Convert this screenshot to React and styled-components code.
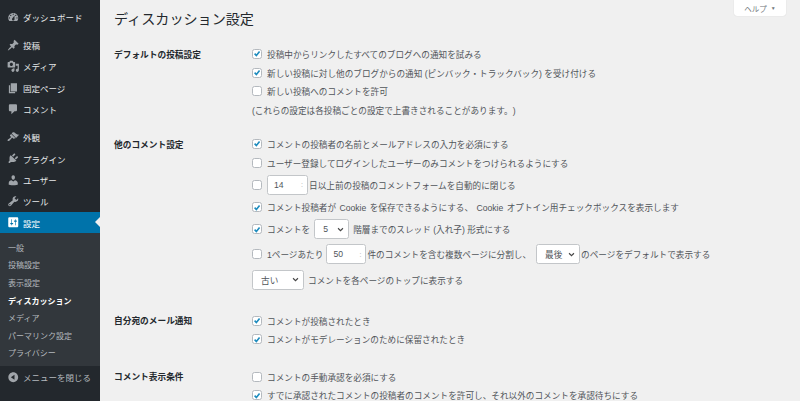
import React from 'react';
import styled, { createGlobalStyle } from 'styled-components';

const GlobalStyle = createGlobalStyle`
  html, body {
    margin: 0;
    padding: 0;
    height: 401px;
    overflow: hidden;
    background: #f0f0f0;
    font-family: "Liberation Sans", "Noto Sans CJK JP", sans-serif;
    text-spacing-trim: space-all;
  }
`;

const Page = styled.div`
  display: flex;
  width: 800px;
  height: 401px;
  overflow: hidden;
`;

const Sidebar = styled.nav`
  width: 100px;
  flex-shrink: 0;
  background: #23282d;
  padding-top: 6.3px;
  box-sizing: border-box;
`;

const MenuItem = styled.div`
  position: relative;
  display: flex;
  align-items: center;
  height: 21.4px;
  margin-bottom: ${(p) => (p.$sep ? '6.6px' : '0')};
  padding-left: 7px;
  font-size: 8.5px;
  color: ${(p) => (p.$active ? '#fff' : '#e6e8ea')};
  background: ${(p) => (p.$active ? '#0073aa' : 'transparent')};

  svg {
    width: 12.5px;
    height: 12.5px;
    margin-right: 3.5px;
    flex-shrink: 0;
    fill: ${(p) => (p.$active ? '#fff' : '#a0a5aa')};
  }

  ${(p) =>
    p.$active &&
    `&::after {
      content: "";
      position: absolute;
      right: 0;
      top: 5px;
      border: 5.5px solid transparent;
      border-right-color: #f0f0f0;
      border-left-width: 0;
    }`}
`;

const SubMenu = styled.div`
  background: #32373c;
  padding: 6.5px 0 2.5px 8px;
`;

const SubItem = styled.div`
  height: 17.6px;
  line-height: 17.6px;
  font-size: 8px;
  font-weight: ${(p) => (p.$current ? 700 : 400)};
  color: ${(p) => (p.$current ? '#fff' : '#b4b9be')};
`;

const CollapseRow = styled(MenuItem)`
  margin-top: 1px;
  color: #b4b9be;
`;

const Main = styled.main`
  position: relative;
  flex: 1;
  padding-left: 14px;
  background: #f0f0f0;
  color: #50555a;
`;

const HelpTab = styled.div`
  position: absolute;
  top: 0;
  right: 14px;
  width: 52px;
  height: 16px;
  box-sizing: border-box;
  display: flex;
  align-items: center;
  justify-content: center;
  gap: 4px;
  background: #fff;
  border-radius: 0 0 3px 3px;
  box-shadow: 0 0 1px rgba(0, 0, 0, 0.2);
  font-size: 7.5px;
  color: #72777c;

  span {
    font-size: 5px;
  }
`;

const Title = styled.h1`
  margin: 0;
  padding-top: 9px;
  height: 44.6px;
  box-sizing: border-box;
  font-size: 14.1px;
  line-height: 20px;
  font-weight: 400;
  color: #23282d;
`;

const Section = styled.section`
  display: flex;
  padding-bottom: ${(p) => p.$after || 18.7}px;
`;

const Label = styled.div`
  width: 138px;
  flex-shrink: 0;
  height: 18.7px;
  padding-top: 1px;
  box-sizing: content-box;
  line-height: 18.7px;
  font-size: 8.7px;
  font-weight: 700;
  color: #23282d;
`;

const Fields = styled.div`
  display: flex;
  flex-direction: column;
`;

const Row = styled.div`
  display: flex;
  align-items: center;
  height: ${(p) => p.$h || 18.7}px;
  font-size: 8.65px;
  white-space: pre;
  word-spacing: ${(p) => p.$wordGap || 0}px;
`;

const Box = styled.span`
  width: 10px;
  height: 10px;
  box-sizing: border-box;
  margin-right: 5px;
  flex-shrink: 0;
  display: flex;
  align-items: center;
  justify-content: center;
  background: #fff;
  border: 1px solid #b4b9be;
  border-radius: 2.5px;

  svg {
    width: 9px;
    height: 9px;
    fill: none;
    stroke: #1e8cbe;
    stroke-width: 2;
  }
`;

const Field = styled.span`
  height: 20px;
  width: ${(p) => p.$w}px;
  box-sizing: border-box;
  flex-shrink: 0;
  display: flex;
  align-items: center;
  justify-content: space-between;
  margin: 0 ${(p) => (p.$mr === undefined ? 1 : p.$mr)}px 0 ${(p) => p.$ml || 0}px;
  padding: 0 4px 0 ${(p) => p.$pad || 6}px;
  background: #fff;
  border: 1px solid #c3c6c9;
  border-radius: 2.5px;
  font-size: 8.65px;
  color: #50555a;

  svg {
    width: 7px;
    height: 7px;
    fill: none;
    stroke: #444;
    stroke-width: 1.6;
  }
`;

const Spin = styled.i`
  font-style: normal;
  font-size: 7px;
  color: #a8a8a8;
`;

const Ic = ({ d }) => (
  <svg viewBox="0 0 20 20">
    <path d={d} />
  </svg>
);

const icons = {
  dashboard:
    'M3.76 16h12.48c1.1-1.37 1.76-3.11 1.76-5 0-4.42-3.58-8-8-8s-8 3.58-8 8c0 1.89.66 3.63 1.76 5zM10 4c.55 0 1 .45 1 1s-.45 1-1 1-1-.45-1-1 .45-1 1-1zM6 6c.55 0 1 .45 1 1s-.45 1-1 1-1-.45-1-1 .45-1 1-1zm8 0c.55 0 1 .45 1 1s-.45 1-1 1-1-.45-1-1 .45-1 1-1zm-5.37 5.55L12 7v6c0 1.1-.9 2-2 2s-2-.9-2-2c0-.57.24-1.08.63-1.45zM4 10c.55 0 1 .45 1 1s-.45 1-1 1-1-.45-1-1 .45-1 1-1zm12 0c.55 0 1 .45 1 1s-.45 1-1 1-1-.45-1-1 .45-1 1-1z',
  post:
    'M10.44 3.02l1.82-1.82 6.36 6.35-1.83 1.82c-1.05-.68-2.48-.57-3.41.36l-.75.75c-.92.93-1.04 2.35-.35 3.41l-1.83 1.82-2.41-2.41-2.8 2.79c-.42.42-3.38 2.71-3.8 2.29s1.86-3.39 2.28-3.81l2.79-2.79L4.1 9.36l1.83-1.82c1.05.69 2.48.57 3.4-.36l.75-.75c.93-.92 1.05-2.35.36-3.41z',
  media:
    'M13 11V4c0-.55-.45-1-1-1h-1.67L9 1H5L3.67 3H2c-.55 0-1 .45-1 1v7c0 .55.45 1 1 1h10c.55 0 1-.45 1-1zM7 4.5c1.38 0 2.5 1.12 2.5 2.5S8.38 9.5 7 9.5 4.5 8.38 4.5 7 5.62 4.5 7 4.5zM14 6h5v10.5c0 1.38-1.12 2.5-2.5 2.5S14 17.88 14 16.5s1.12-2.5 2.5-2.5c.17 0 .34.02.5.05V9h-3V6zm-4 8.05V13h2v3.5c0 1.38-1.12 2.5-2.5 2.5S7 17.88 7 16.5 8.12 14 9.5 14c.17 0 .34.02.5.05z',
  page: 'M6 15V2h10v13H6zm-1 1h8v2H3V5h2v11z',
  comment:
    'M5 2h9c1.1 0 2 .9 2 2v7c0 1.1-.9 2-2 2h-2l-5 5v-5H5c-1.1 0-2-.9-2-2V4c0-1.1.9-2 2-2z',
  appearance:
    'M14.48 11.06L7.41 3.99l1.5-1.5c.5-.56 2.3-.47 3.51.32 1.21.8 1.43 1.28 2.91 2.1 1.18.64 2.45 1.26 4.45.85zm-.71.71L6.7 4.7 4.93 6.47c-.39.39-.39 1.02 0 1.41l1.06 1.06c.39.39.39 1.03 0 1.42-.6.6-1.43 1.11-2.21 1.69-.35.26-.7.53-1.01.84C1.43 13.23.4 14.99 1.2 15.8c.8.81 2.52-.2 3.86-1.56.3-.31.57-.66.84-1.02.57-.78 1.08-1.61 1.69-2.21.39-.39 1.02-.39 1.41 0l1.06 1.06c.39.39 1.02.39 1.41 0z',
  plugin:
    'M13.11 4.36L9.87 7.6 8 5.73l3.24-3.24c.35-.34 1.05-.2 1.56.32.52.51.66 1.21.31 1.55zm-8 1.77l.91-1.12 9.01 9.01-1.19.84c-.71.71-2.63 1.16-3.82 1.16H6.14L4.9 17.26c-.59.59-1.54.59-2.12 0-.59-.58-.59-1.53 0-2.12l1.24-1.24v-3.88c0-1.13.4-3.19 1.09-3.89zm7.26 3.97l3.24-3.24c.34-.35 1.04-.21 1.55.31.52.51.66 1.21.31 1.55l-3.24 3.25z',
  users:
    'M10 9.25c-2.27 0-2.73-3.44-2.73-3.44C7 4.02 7.82 2 9.97 2c2.16 0 2.98 2.02 2.71 3.81 0 0-.41 3.44-2.68 3.44zm0 2.57L12.72 10c2.39 0 4.52 2.33 4.52 4.53v2.49s-3.65 1.13-7.24 1.13c-3.65 0-7.24-1.13-7.24-1.13v-2.49c0-2.25 1.94-4.48 4.47-4.48z',
  tools:
    'M16.68 9.77c-1.34 1.34-3.3 1.67-4.95.99l-5.41 6.52c-.99.99-2.59.99-3.58 0s-.99-2.59 0-3.57l6.52-5.42c-.68-1.65-.35-3.61.99-4.95 1.28-1.28 3.12-1.62 4.72-1.06l-2.89 2.89 2.82 2.82 2.86-2.87c.53 1.58.18 3.39-1.08 4.65zM3.81 16.21c.4.39 1.04.39 1.43 0 .4-.4.4-1.04 0-1.43-.39-.4-1.03-.4-1.43 0-.39.39-.39 1.03 0 1.43z',
  settings:
    'M18 16V4c0-1.1-.9-2-2-2H4c-1.1 0-2 .9-2 2v12c0 1.1.9 2 2 2h12c1.1 0 2-.9 2-2zM8 11h1c.55 0 1 .45 1 1s-.45 1-1 1H8v1.5c0 .28-.22.5-.5.5s-.5-.22-.5-.5V13H6c-.55 0-1-.45-1-1s.45-1 1-1h1V5.5c0-.28.22-.5.5-.5s.5.22.5.5V11zm5-2h-1c-.55 0-1-.45-1-1s.45-1 1-1h1V5.5c0-.28.22-.5.5-.5s.5.22.5.5V7h1c.55 0 1 .45 1 1s-.45 1-1 1h-1v5.5c0 .28-.22.5-.5.5s-.5-.22-.5-.5V9z',
  collapse:
    'M10 2.16c4.33 0 7.84 3.51 7.84 7.84s-3.51 7.84-7.84 7.84S2.16 14.33 2.16 10 5.71 2.16 10 2.16zm2 11.72V6.12L6.18 9.97z',
};

const Check = ({ on }) => (
  <Box>
    {on && (
      <svg viewBox="0 0 10 10">
        <path d="M2 5.2l2.2 2.3L8.2 2.6" />
      </svg>
    )}
  </Box>
);

const Chevron = () => (
  <svg viewBox="0 0 10 10">
    <path d="M1.5 3.2L5 6.8l3.5-3.6" />
  </svg>
);

const menuTop = [
  { icon: 'dashboard', text: 'ダッシュボード', sep: true },
  { icon: 'post', text: '投稿' },
  { icon: 'media', text: 'メディア' },
  { icon: 'page', text: '固定ページ' },
  { icon: 'comment', text: 'コメント', sep: true },
  { icon: 'appearance', text: '外観' },
  { icon: 'plugin', text: 'プラグイン' },
  { icon: 'users', text: 'ユーザー' },
  { icon: 'tools', text: 'ツール' },
];

const subItems = ['一般', '投稿設定', '表示設定', 'ディスカッション', 'メディア', 'パーマリンク設定', 'プライバシー'];

export default function App() {
  return (
    <Page>
      <GlobalStyle />
      <Sidebar>
        {menuTop.map((m) => (
          <MenuItem key={m.text} $sep={m.sep}>
            <Ic d={icons[m.icon]} />
            {m.text}
          </MenuItem>
        ))}
        <MenuItem $active>
          <Ic d={icons.settings} />
          設定
        </MenuItem>
        <SubMenu>
          {subItems.map((s) => (
            <SubItem key={s} $current={s === 'ディスカッション'}>
              {s}
            </SubItem>
          ))}
        </SubMenu>
        <CollapseRow>
          <Ic d={icons.collapse} />
          メニューを閉じる
        </CollapseRow>
      </Sidebar>

      <Main>
        <HelpTab>
          ヘルプ <span>▼</span>
        </HelpTab>
        <Title>ディスカッション設定</Title>

        <Section $after={15.2}>
          <Label>デフォルトの投稿設定</Label>
          <Fields>
            <Row><Check on />投稿中からリンクしたすべてのブログへの通知を試みる</Row>
            <Row><Check on />新しい投稿に対し他のブログからの通知 (ピンバック・トラックバック) を受け付ける</Row>
            <Row><Check />新しい投稿へのコメントを許可</Row>
            <Row>(これらの設定は各投稿ごとの設定で上書きされることがあります。)</Row>
          </Fields>
        </Section>

        <Section>
          <Label>他のコメント設定</Label>
          <Fields>
            <Row><Check on />コメントの投稿者の名前とメールアドレスの入力を必須にする</Row>
            <Row><Check />ユーザー登録してログインしたユーザーのみコメントをつけられるようにする</Row>
            <Row $h={26}>
              <Check />
              <Field $w={41}>14<Spin>:</Spin></Field>
              日以上前の投稿のコメントフォームを自動的に閉じる
            </Row>
            <Row $wordGap={1}><Check on />コメント投稿者が Cookie を保存できるようにする、 Cookie オプトイン用チェックボックスを表示します</Row>
            <Row $h={25}>
              <Check on />
              コメントを
              <Field $w={35} $ml={4} $mr={4} $pad={8}>5<Chevron /></Field>
              階層までのスレッド (入れ子) 形式にする
            </Row>
            <Row $h={25}>
              <Check />
              1ページあたり
              <Field $w={40} $ml={3}>50<Spin>:</Spin></Field>
              件のコメントを含む複数ページに分割し、
              <Field $w={44} $ml={5} $pad={8}>最後<Chevron /></Field>
              のページをデフォルトで表示する
            </Row>
            <Row $h={26}>
              <Field $w={52} $mr={4} $pad={8}>古い<Chevron /></Field>
              コメントを各ページのトップに表示する
            </Row>
          </Fields>
        </Section>

        <Section>
          <Label>自分宛のメール通知</Label>
          <Fields>
            <Row><Check on />コメントが投稿されたとき</Row>
            <Row><Check on />コメントがモデレーションのために保留されたとき</Row>
          </Fields>
        </Section>

        <Section>
          <Label>コメント表示条件</Label>
          <Fields>
            <Row><Check />コメントの手動承認を必須にする</Row>
            <Row><Check on />すでに承認されたコメントの投稿者のコメントを許可し、それ以外のコメントを承認待ちにする</Row>
          </Fields>
        </Section>
      </Main>
    </Page>
  );
}
